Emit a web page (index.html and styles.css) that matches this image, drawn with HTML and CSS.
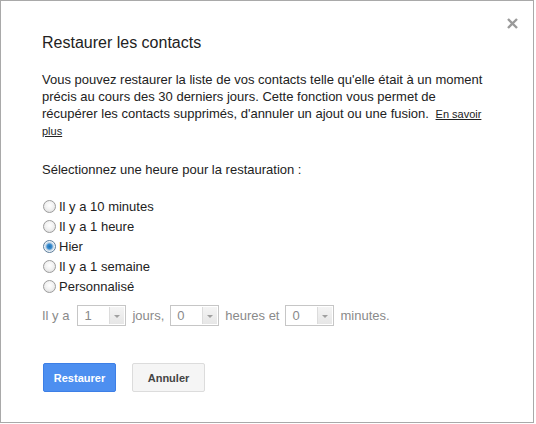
FILE: index.html
```html
<html>
  <head>
    <meta charset="utf-8">
    <link rel="stylesheet" href="styles.css">
  </head>
  <body>
    <div class="dialog">
      <span class="close">
        <svg width="11" height="11" viewBox="0 0 11 11"><path d="M1 1L10 10M10 1L1 10" stroke="#9a9a9a" stroke-width="2.4"/></svg>
      </span>

      <h1 class="title">Restaurer les contacts</h1>

      <p class="intro">
        Vous pouvez restaurer la liste de vos contacts telle qu'elle était à un moment
        précis au cours des 30 derniers jours. Cette fonction vous permet de
        récupérer les contacts supprimés, d'annuler un ajout ou une fusion.
        <a href="#" class="more">En savoir plus</a>
      </p>

      <p class="pick">Sélectionnez une heure pour la restauration :</p>

      <div class="options">
        <label class="option"><input type="radio" name="when"> Il y a 10 minutes</label>
        <label class="option"><input type="radio" name="when"> Il y a 1 heure</label>
        <label class="option"><input type="radio" name="when" checked> Hier</label>
        <label class="option"><input type="radio" name="when"> Il y a 1 semaine</label>
        <label class="option"><input type="radio" name="when"> Personnalisé</label>
      </div>

      <div class="custom">
        <span class="lead">Il y a</span>
        <span class="dropdown"><span class="value">1</span><span class="arrow"></span></span>
        <span>jours,</span>
        <span class="dropdown"><span class="value">0</span><span class="arrow"></span></span>
        <span>heures et</span>
        <span class="dropdown"><span class="value">0</span><span class="arrow"></span></span>
        <span>minutes.</span>
      </div>

      <div class="buttons">
        <button class="btn primary">Restaurer</button>
        <button class="btn">Annuler</button>
      </div>
    </div>
  </body>
</html>
```

FILE: styles.css
```css
body {
    margin: 0;
    font-family: "Liberation Sans", Arial, sans-serif;
    color: #222;
    background: #fff;
}
.dialog {
    position: relative;
    box-sizing: border-box;
    width: 534px;
    height: 423px;
    border: 1px solid #a9a9a9;
    padding: 32px 41px 0 41px;
}
.close {
    position: absolute;
    top: 17px;
    right: 15px;
    width: 11px;
    height: 11px;
}
.close svg {
    display: block;
}
.title {
    margin: 0;
    font-size: 16px;
    line-height: 20px;
    font-weight: normal;
    color: #222;
}
.intro {
    width: 445px;
    margin: 18px 0 0 0;
    font-size: 13px;
    line-height: 17px;
}
.more {
    margin-left: 3px;
    font-size: 11px;
    color: #222;
}
.pick {
    margin: 21px 0 0 0;
    font-size: 13px;
    line-height: 17px;
}
.options {
    margin-top: 18px;
    display: flex;
    flex-direction: column;
}
.option {
    display: flex;
    align-items: center;
    height: 20px;
    font-size: 13px;
}
.option input {
    appearance: none;
    -webkit-appearance: none;
    box-sizing: border-box;
    width: 13px;
    height: 13px;
    margin: 0 3px 0 1px;
    border: 1px solid #9c9c9c;
    border-radius: 50%;
    background: radial-gradient(circle at 50% 40%, #fff 0%, #f2f2f2 45%, #d9d9d9 100%);
}
.option input:checked {
    border-color: #5b7c99;
    background: radial-gradient(circle at 50% 50%, #1f6fb0 0, #3a8fd3 2.5px, #aac7e0 3.5px, #eef3f8 5px);
}
.custom {
    margin-top: 8px;
    height: 22px;
    display: flex;
    align-items: center;
    gap: 6px;
    font-size: 13px;
    color: #8a8a8a;
}
.custom .lead {
    margin-right: 2px;
}
.dropdown {
    box-sizing: border-box;
    display: flex;
    width: 49px;
    height: 21px;
    border: 1px solid #c6c6c6;
    background: #fff;
}
.dropdown .value {
    flex: 1;
    padding-left: 6px;
    line-height: 19px;
    color: #8a8a8a;
}
.dropdown .arrow {
    position: relative;
    width: 14px;
    border-left: 1px solid #dcdcdc;
    background: linear-gradient(#f4f4f4, #e6e6e6);
    margin: 1px;
}
.dropdown .arrow::after {
    content: "";
    position: absolute;
    left: 4px;
    top: 8px;
    border-left: 3px solid transparent;
    border-right: 3px solid transparent;
    border-top: 3px solid #a0a0a0;
}
.buttons {
    margin-top: 37px;
    display: flex;
    gap: 16px;
    padding-left: 1px;
}
.btn {
    box-sizing: border-box;
    height: 29px;
    width: 73px;
    padding: 0;
    border: 1px solid #dcdcdc;
    border-radius: 2px;
    background: #f5f5f5;
    color: #444;
    font-family: "Liberation Sans", Arial, sans-serif;
    font-size: 11px;
    font-weight: bold;
}
.btn.primary {
    background: #4d8ff0;
    border-color: #3d7fe6;
    color: #fff;
}
```
